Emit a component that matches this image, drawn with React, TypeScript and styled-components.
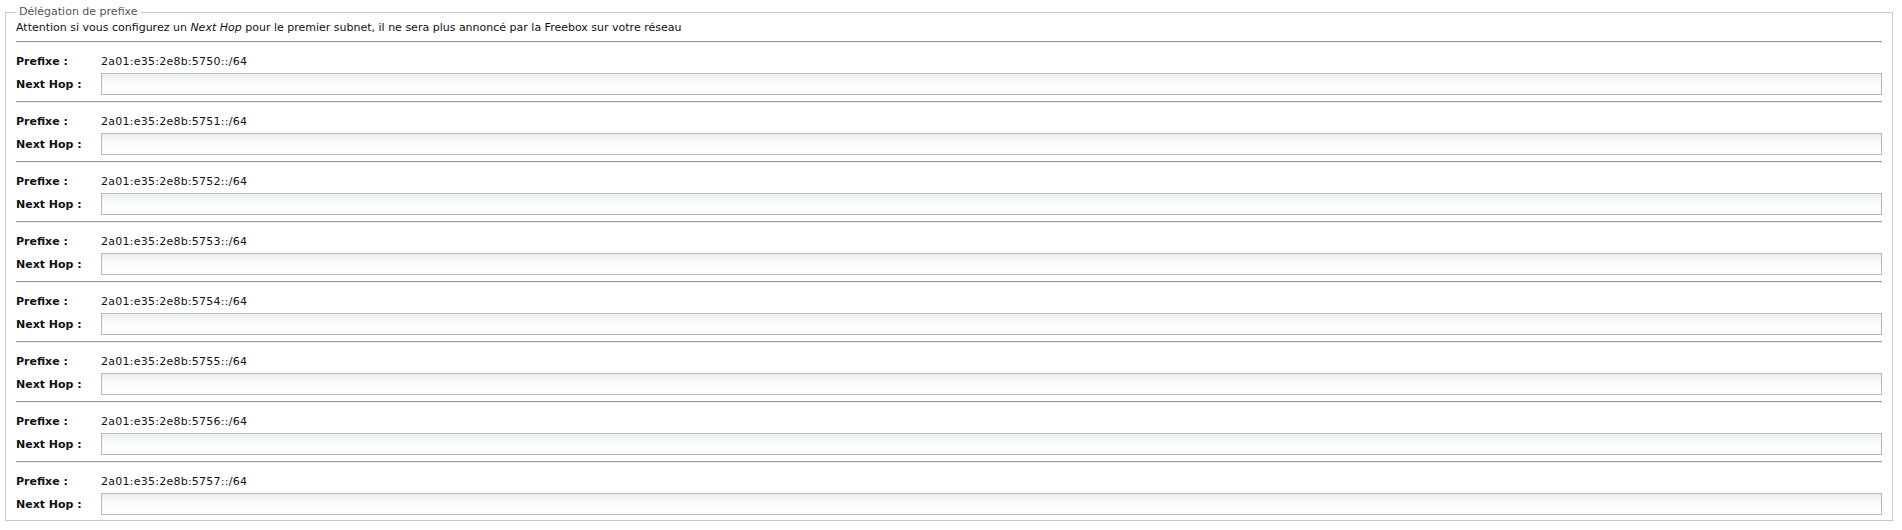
import React from 'react';
import styled, { createGlobalStyle } from 'styled-components';

const GlobalStyle = createGlobalStyle`
  html, body {
    margin: 0;
    padding: 0;
    background: #ffffff;
  }
  body {
    font-family: 'DejaVu Sans', Verdana, sans-serif;
    font-size: 11px;
    color: #111;
  }
`;

const prefixes = [
  '2a01:e35:2e8b:5750::/64',
  '2a01:e35:2e8b:5751::/64',
  '2a01:e35:2e8b:5752::/64',
  '2a01:e35:2e8b:5753::/64',
  '2a01:e35:2e8b:5754::/64',
  '2a01:e35:2e8b:5755::/64',
  '2a01:e35:2e8b:5756::/64',
  '2a01:e35:2e8b:5757::/64',
];

const App = () => {
  return (
    <>
      <GlobalStyle />
      <Fieldset>
        <Legend>Délégation de prefixe</Legend>
        <Notice>
          Attention si vous configurez un <em>Next Hop</em> pour le premier subnet, il ne sera plus
          annoncé par la Freebox sur votre réseau
        </Notice>
        {prefixes.map((p) => (
          <Block key={p}>
            <Separator />
            <Rows>
              <Label>Prefixe :</Label>
              <Value>{p}</Value>
              <Label>Next Hop :</Label>
              <HopInput type="text" />
            </Rows>
          </Block>
        ))}
      </Fieldset>
    </>
  );
};

const Fieldset = styled.fieldset`
  margin: 5px 9px 0 5px;
  padding: 0 10px 5px 10px;
  border: 1px solid #c8c8c8;
  min-width: 0;
`;

const Legend = styled.legend`
  padding: 0 3px;
  color: #555;
  font-size: 11px;
  line-height: 14px;
`;

const Notice = styled.div`
  margin-top: 2px;
  line-height: 14px;
  color: #111;
  em {
    font-style: italic;
  }
`;

const Block = styled.div`
  display: flex;
  flex-direction: column;
`;

const Separator = styled.hr`
  margin: 6px 0 0 0;
  height: 0;
  border: none;
  border-top: 1px solid #9c9c9c;
  border-bottom: 1px solid #ececec;
`;

const Rows = styled.div`
  display: grid;
  grid-template-columns: 85px 1fr;
  grid-template-rows: 20px 22px;
  row-gap: 2px;
  align-items: center;
  margin-top: 8px;
`;

const Label = styled.span`
  font-weight: bold;
  color: #111;
  white-space: nowrap;
`;

const Value = styled.span`
  color: #111;
  letter-spacing: 0.25px;
`;

const HopInput = styled.input`
  box-sizing: border-box;
  height: 22px;
  width: 100%;
  margin: 0;
  padding: 1px 3px;
  border: 1px solid #b5b8c8;
  background: linear-gradient(to bottom, #eaeeee 0%, #f8fafa 40%, #ffffff 100%);
  font-family: 'DejaVu Sans', Verdana, sans-serif;
  font-size: 11px;
  outline: none;
`;

export default App;
